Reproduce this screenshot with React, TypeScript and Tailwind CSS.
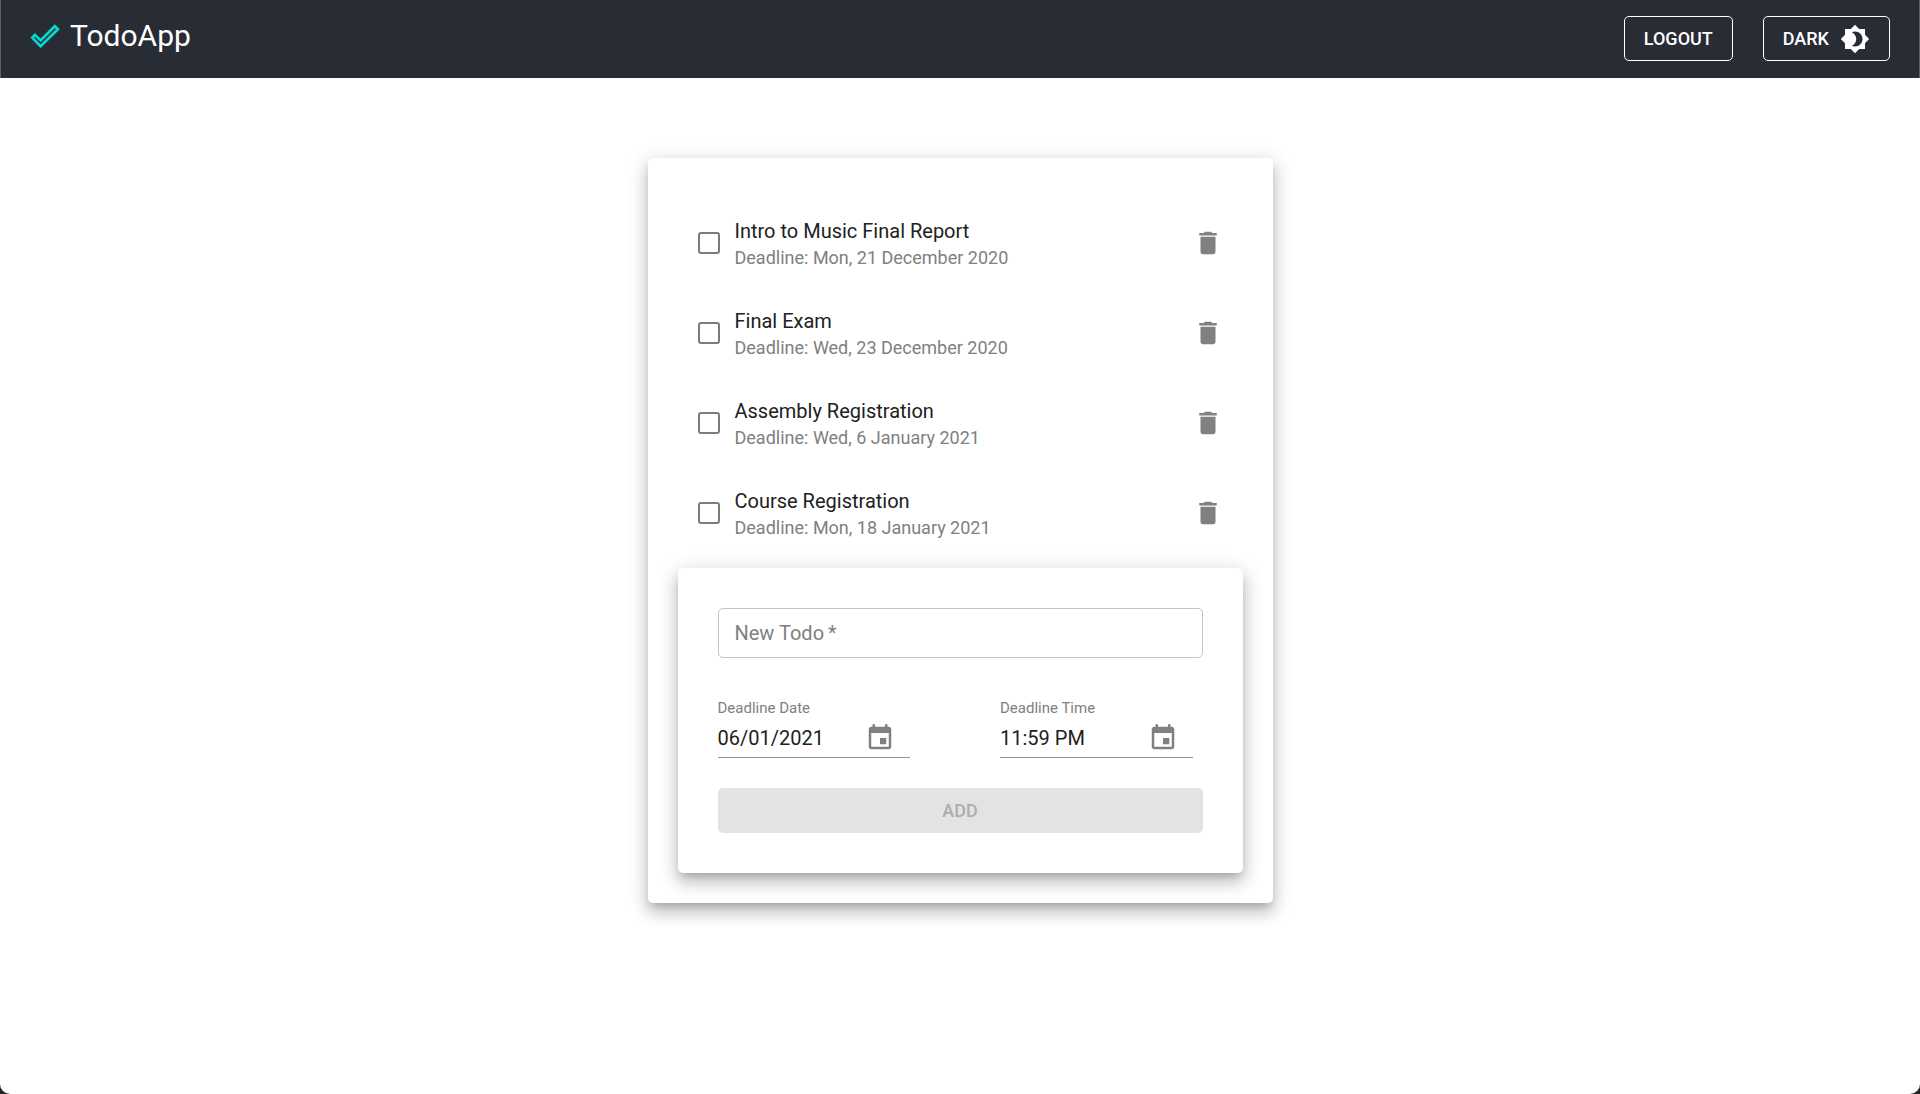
import React, { useState } from "react";

const SHADOW =
  "shadow-[0px_6px_8px_-4px_rgba(0,0,0,0.2),0px_10px_15px_1px_rgba(0,0,0,0.14),0px_4px_20px_3px_rgba(0,0,0,0.12)]";

type Todo = { id: string; title: string; deadline: string };

const todos: Todo[] = [
  { id: "music", title: "Intro to Music Final Report", deadline: "Mon, 21 December 2020" },
  { id: "exam", title: "Final Exam", deadline: "Wed, 23 December 2020" },
  { id: "assembly", title: "Assembly Registration", deadline: "Wed, 6 January 2021" },
  { id: "course", title: "Course Registration", deadline: "Mon, 18 January 2021" },
];

function Icon({ d }: { d: string }) {
  return (
    <svg viewBox="0 0 24 24" className="size-[30px] shrink-0" fill="currentColor" aria-hidden="true">
      <path d={d} />
    </svg>
  );
}

const TRASH = "M6 19c0 1.1.9 2 2 2h8c1.1 0 2-.9 2-2V7H6v12zM19 4h-3.5l-1-1h-5l-1 1H5v2h14V4z";
const CALENDAR =
  "M17 12h-5v5h5v-5zM16 1v2H8V1H6v2H5c-1.11 0-1.99.9-1.99 2L3 19c0 1.1.89 2 2 2h14c1.1 0 2-.9 2-2V5c0-1.1-.9-2-2-2h-1V1h-2zm3 18H5V8h14v11z";
const BRIGHTNESS =
  "M20 8.69V4h-4.69L12 .69 8.69 4H4v4.69L.69 12 4 15.31V20h4.69L12 23.31 15.31 20H20v-4.69L23.31 12 20 8.69zM12 18c-.89 0-1.74-.2-2.5-.55C11.56 16.5 13 14.42 13 12s-1.44-4.5-3.5-5.45C10.26 6.2 11.11 6 12 6c3.31 0 6 2.69 6 6s-2.69 6-6 6z";

function Header() {
  return (
    <header className="flex h-[78px] items-start justify-between border-x border-[#5b5e64] bg-[#282c35] px-[29px] pt-4 text-white">
      <div className="flex items-center gap-[10px]">
        <svg viewBox="0 0 30 24" className="h-6 w-[30px]" fill="none" stroke="#06d9d0" strokeWidth="2.7" aria-hidden="true">
          <path d="M2.2 13.6 5 10.8 10.6 16.4 24.8 2.2 27.9 5.3 10.6 22.2Z" />
        </svg>
        <h1 className="text-[30px] leading-10">TodoApp</h1>
      </div>
      <div className="flex gap-[30px]">
        <button className="h-[45px] rounded-[5px] border border-white px-[19px] text-[18px] font-medium">LOGOUT</button>
        <button className="flex h-[45px] items-center gap-[11px] rounded-[5px] border border-white px-[19px] text-[18px] font-medium">
          DARK
          <Icon d={BRIGHTNESS} />
        </button>
      </div>
    </header>
  );
}

function TodoRow({ todo }: { todo: Todo }) {
  return (
    <li className="flex h-[90px] items-center px-5">
      <input
        id={todo.id}
        type="checkbox"
        className="size-[22px] shrink-0 appearance-none rounded-[3px] border-2 border-[#7c7c7c] checked:bg-[#7c7c7c]"
      />
      <label htmlFor={todo.id} className="grow pl-[15px]">
        <span className="block text-[20px] leading-[30px] text-[#212121]">{todo.title}</span>
        <span className="block text-[18px] leading-6 text-[#808080]">Deadline: {todo.deadline}</span>
      </label>
      <button aria-label={`Delete ${todo.title}`} className="text-[#808080]">
        <Icon d={TRASH} />
      </button>
    </li>
  );
}

function PickerField({ id, label, initial }: { id: string; label: string; initial: string }) {
  const [value, setValue] = useState(initial);
  return (
    <div className="min-w-0 flex-1">
      <label htmlFor={id} className="block text-[15px] leading-5 text-[#808080]">
        {label}
      </label>
      <div className="flex h-10 items-center border-b border-[#949494] pr-[15px]">
        <input
          id={id}
          value={value}
          onChange={(e) => setValue(e.target.value)}
          className="min-w-0 flex-1 bg-transparent text-[20px] text-[#212121] outline-none"
        />
        <button type="button" aria-label={`Choose ${label}`} className="text-[#808080]">
          <Icon d={CALENDAR} />
        </button>
      </div>
    </div>
  );
}

function NewTodoForm() {
  return (
    <form className={`rounded-[5px] bg-white p-10 ${SHADOW}`} onSubmit={(e) => e.preventDefault()}>
      <input
        aria-label="New Todo"
        placeholder={"New Todo\u2009*"}
        required
        className="block h-[50px] w-full rounded-[5px] border border-[#c4c4c4] px-4 text-[20px] text-[#212121] outline-none placeholder:text-[#808080]"
      />
      <div className="mt-10 flex gap-[90px] pr-[10px]">
        <PickerField id="deadline-date" label="Deadline Date" initial="06/01/2021" />
        <PickerField id="deadline-time" label="Deadline Time" initial="11:59 PM" />
      </div>
      <button disabled className="mt-[30px] block h-[45px] w-full rounded-[5px] bg-[#e3e3e3] text-[18px] font-medium text-[#adadad]">
        ADD
      </button>
    </form>
  );
}

export default function App() {
  return (
    <div className="flex min-h-screen flex-col bg-[#222222] font-['Roboto',sans-serif]">
      <Header />
      <main className="grow rounded-b-[10px] bg-white px-5 py-20">
        <section className={`mx-auto w-full max-w-[625px] rounded-[5px] bg-white p-[30px] ${SHADOW}`}>
          <ul className="py-[10px]">
            {todos.map((todo) => (
              <TodoRow key={todo.id} todo={todo} />
            ))}
          </ul>
          <NewTodoForm />
        </section>
      </main>
    </div>
  );
}
